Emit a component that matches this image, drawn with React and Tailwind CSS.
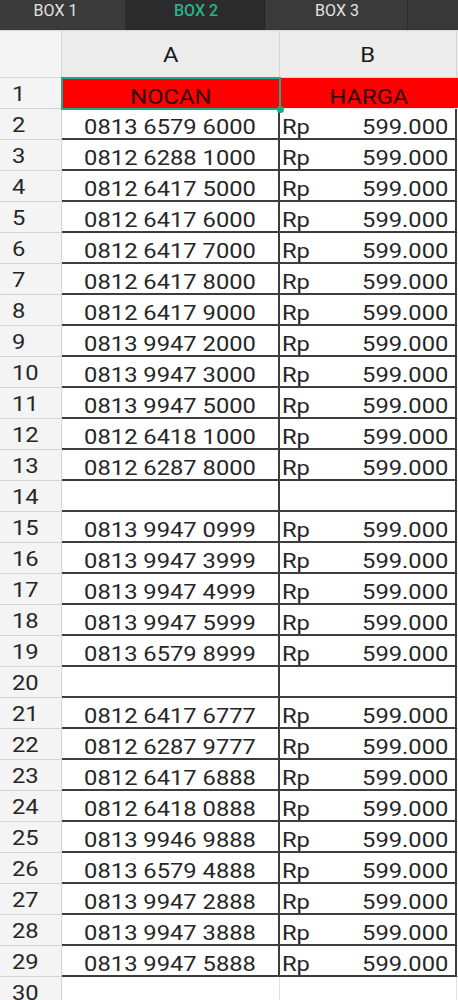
import React from "react";

const rows = [
  "0813 6579 6000",
  "0812 6288 1000",
  "0812 6417 5000",
  "0812 6417 6000",
  "0812 6417 7000",
  "0812 6417 8000",
  "0812 6417 9000",
  "0813 9947 2000",
  "0813 9947 3000",
  "0813 9947 5000",
  "0812 6418 1000",
  "0812 6287 8000",
  "",
  "0813 9947 0999",
  "0813 9947 3999",
  "0813 9947 4999",
  "0813 9947 5999",
  "0813 6579 8999",
  "",
  "0812 6417 6777",
  "0812 6287 9777",
  "0812 6417 6888",
  "0812 6418 0888",
  "0813 9946 9888",
  "0813 6579 4888",
  "0813 9947 2888",
  "0813 9947 3888",
  "0813 9947 5888",
];

const font = { fontFamily: "Roboto, 'Noto Sans', Arial, sans-serif" };

function Stretch({ children, origin = "origin-center" }) {
  return (
    <span className={`inline-block scale-x-[1.13] ${origin}`}>{children}</span>
  );
}

export default function App() {
  return (
    <div className="w-[458px] h-[1000px] overflow-hidden bg-white" style={font}>
      {/* Tab bar */}
      <div className="flex h-[31px] bg-[#3a3a3a] text-[16px] leading-[20px] border-b border-[#d8d8d8]">
        <div className="w-[126px] shrink-0 pr-[14px] flex justify-center pt-[1px] text-[#e2e2e2] border-r border-[#2c2c2c]">
          BOX 1
        </div>
        <div className="w-[141px] shrink-0 flex justify-center pt-[1px] bg-[#2b2b2b] text-[#26b48d] font-medium border-r border-[#444]">
          BOX 2
        </div>
        <div className="w-[141px] shrink-0 flex justify-center pt-[1px] text-[#e2e2e2] border-r border-[#2c2c2c]">
          BOX 3
        </div>
        <div className="flex-1 bg-[#383838]"></div>
      </div>

      {/* Column header */}
      <div className="flex h-[47px] text-[21px] text-[#1a1a1a]">
        <div className="w-[62px] shrink-0 bg-[#f4f4f4] border-r border-b border-[#d4d4d4]"></div>
        <div className="w-[218px] shrink-0 bg-[#ececec] border-r border-b border-[#d4d4d4] flex items-center justify-center pt-[3px]">
          <Stretch>A</Stretch>
        </div>
        <div className="w-[177px] shrink-0 bg-[#ececec] border-r border-b border-[#d4d4d4] flex items-center justify-center pt-[3px]">
          <Stretch>B</Stretch>
        </div>
        <div className="flex-1 bg-[#ececec] border-b border-[#d4d4d4]"></div>
      </div>

      {/* Row 1 */}
      <div className="flex h-[31px] text-[21px]">
        <div className="w-[62px] shrink-0 bg-[#f4f4f4] border-r border-b border-[#d4d4d4] pl-[12px] pt-[4px] leading-[24px] text-[#2a2a2a]">
          <Stretch origin="origin-left">1</Stretch>
        </div>
        <div className="relative w-[218px] shrink-0 bg-[#ff0000] flex justify-center pt-[7px] leading-[24px] text-[#2e0505]">
          <Stretch>NOCAN</Stretch>
          <div className="absolute -left-[1px] -top-[1px] -right-[1px] -bottom-[1px] border-2 border-[#1fa98a]"></div>
          <div className="absolute -right-[4px] -bottom-[4px] w-[7px] h-[7px] rounded-full bg-[#1fa98a]"></div>
        </div>
        <div className="w-[177px] shrink-0 bg-[#ff0000] border-b border-[#e8e8e8] flex justify-center pt-[7px] leading-[24px] text-[#2e0505]">
          <Stretch>HARGA</Stretch>
        </div>
        <div className="flex-1 bg-[#ff0000] border-b border-[#e8e8e8]"></div>
      </div>

      {/* Data rows */}
      {rows.map((num, i) => (
        <div key={i} className="flex h-[31px] text-[21px] text-[#262626]">
          <div className="w-[62px] shrink-0 bg-[#f4f4f4] border-r border-b border-[#d4d4d4] pl-[12px] pt-[4px] leading-[24px]">
            <Stretch origin="origin-left">{i + 2}</Stretch>
          </div>
          <div className="w-[218px] shrink-0 border-r-2 border-b-2 border-[#3d3d3d] flex justify-center pt-[6px] leading-[24px]">
            {num && <Stretch>{num}</Stretch>}
          </div>
          <div className="w-[177px] shrink-0 border-r-2 border-b-2 border-[#3d3d3d] flex justify-between pl-[2px] pr-[7px] pt-[6px] leading-[24px]">
            {num && (
              <>
                <Stretch origin="origin-left">Rp</Stretch>
                <Stretch origin="origin-right">599.000</Stretch>
              </>
            )}
          </div>
          <div className="flex-1 border-b border-[#d4d4d4]"></div>
        </div>
      ))}

      {/* Row 30 */}
      <div className="flex h-[31px] text-[21px] text-[#262626]">
        <div className="w-[62px] shrink-0 bg-[#f4f4f4] border-r border-b border-[#d4d4d4] pl-[12px] pt-[4px] leading-[24px]">
          <Stretch origin="origin-left">30</Stretch>
        </div>
        <div className="w-[218px] shrink-0 border-r border-b border-[#e0e0e0]"></div>
        <div className="w-[177px] shrink-0 border-r border-b border-[#e0e0e0]"></div>
        <div className="flex-1 border-b border-[#e0e0e0]"></div>
      </div>
    </div>
  );
}
